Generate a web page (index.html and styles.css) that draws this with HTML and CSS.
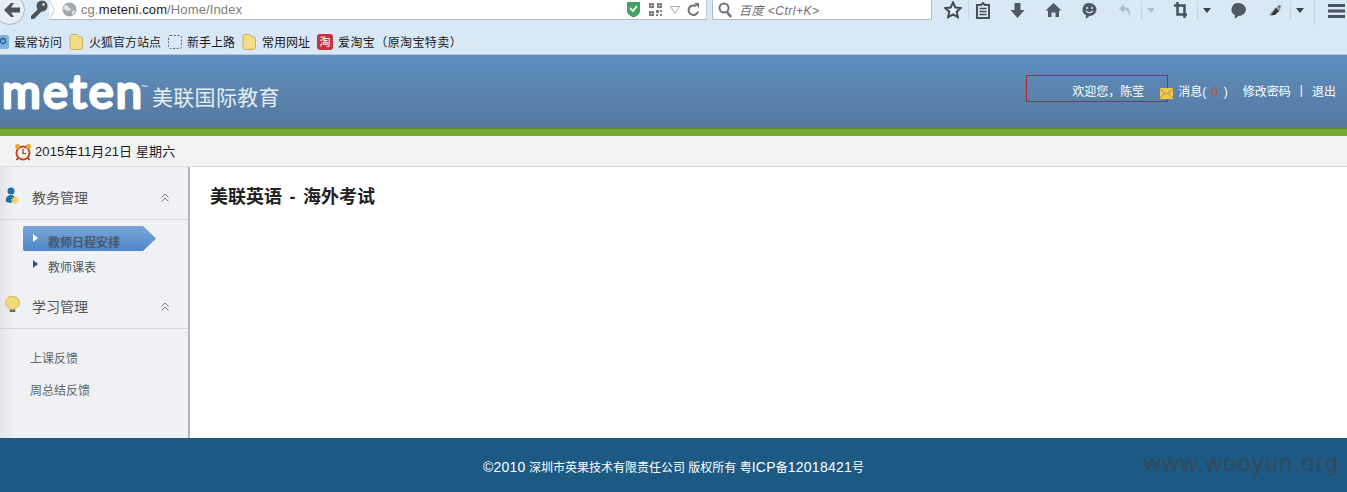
FILE: index.html
```html
<!DOCTYPE html>
<html lang="zh">
<head>
<meta charset="utf-8">
<title>美联英语 - 海外考试</title>
<link rel="stylesheet" href="styles.css">
</head>
<body>
<div class="browser">
  <div class="navrow">
    <div class="backbtn">
      <svg width="16" height="14" viewBox="0 0 16 14"><path d="M0 7 7 0h3L7 4.500h9v5H7L10 14H7z" fill="#4a545e"/></svg>
    </div>
    <svg class="keyicon" width="20" height="20" viewBox="0 0 20 20"><circle cx="13" cy="6" r="5.500" fill="#4c5258"/><path d="M10 8 2 16v3h3l8-8z" fill="#4c5258"/><circle cx="14.500" cy="4.500" r="1.400" fill="#c9d3dc"/></svg>
    <div class="urlbar">
      <svg class="urlchev" width="6" height="20" viewBox="0 0 6 20"><path d="M0 0 5.500 10 0 20" fill="none" stroke="#c3ccd4"/></svg>
      <svg class="globe" width="15" height="15" viewBox="0 0 15 15"><circle cx="7.500" cy="7.500" r="7" fill="#a3a8ac"/><path d="M3 3c3 0 3 2 5 3s0 3-2 3-3-2-5-2zM10 9l3-1-1 4-2 1z" fill="#dfe3e6"/></svg>
      <span class="url">cg.<b>meteni.com</b>/Home/Index</span>
      <span class="urlicons">
        <svg width="15" height="17" viewBox="0 0 15 17"><path d="M1 1h13v9c0 3-3 5-6.500 6.500C4 15 1 13 1 10z" fill="#3fa168"/><path d="m4 7 3 3 4-5" fill="none" stroke="#f1f7c8" stroke-width="2"/></svg>
        <svg width="15" height="15" viewBox="0 0 15 15"><path d="M1 1h5v5H1zM9 1h5v5H9zM1 9h5v5H1zM8 8h3v3H8zM12 12h2v2h-2zM12 8h2v2h-2zM8 12h2v2H8z" fill="#7b8186"/><path d="M3 3h1v1H3zM11 3h1v1h-1zM3 11h1v1H3z" fill="#fff"/></svg>
        <svg width="10" height="8" viewBox="0 0 10 8"><path d="M.5.500h9L5 7.500z" fill="none" stroke="#a8adb2"/></svg>
        <svg width="13" height="14" viewBox="0 0 13 14"><path d="M11 8.500A4.800 4.800 0 1 1 9 3.200" fill="none" stroke="#6c7379" stroke-width="2"/><path d="M7 0h5v5z" fill="#6c7379"/></svg>
      </span>
    </div>
    <div class="searchbar">
      <svg width="15" height="16" viewBox="0 0 15 16"><circle cx="6" cy="6" r="4.500" fill="none" stroke="#6f757b" stroke-width="2"/><path d="m9 10 4 5" stroke="#6f757b" stroke-width="2.500"/></svg>
      <span class="searchtext">百度 &lt;Ctrl+K&gt;</span>
    </div>
    <div class="tools">
      <svg class="tool-star" width="18" height="18" viewBox="0 0 18 18"><path d="m9 1.500 2.300 5 5.400.600-4 3.600 1.100 5.300L9 13.300 4.200 16l1.100-5.300-4-3.600 5.400-.600z" fill="#e9f1f9" stroke="#3f4a55" stroke-width="2"/></svg>
      <span class="divider short"></span>
      <svg class="tool-list" width="14" height="17" viewBox="0 0 14 17"><path d="M1 3h4l2-2 2 2h4v13H1z" fill="#dbe6f0" stroke="#46515b" stroke-width="2"/><path d="M3.500 6.500h7M3.500 9.500h7M3.500 12.500h7" stroke="#46515b" stroke-width="1.500"/></svg>
      <svg class="tool-gap" width="15" height="17" viewBox="0 0 15 17"><path d="M4.500 1h6v7h4l-7 8-7-8h4z" fill="#4f5a64"/></svg>
      <svg class="tool-gap" width="17" height="16" viewBox="0 0 17 16"><path d="M8.500 1 .5 8.500h2.500V15h3.500v-4.500h4V15H14V8.500h2.500z" fill="#4f5a64"/></svg>
      <svg class="tool-near" width="17" height="17" viewBox="0 0 17 17"><path d="M8.500 1a7 6.500 0 0 1 0 13c-1 1-3 2.500-4 2.500l.6-3.200A6.500 6.500 0 0 1 8.500 1z" fill="#4f5a64"/><circle cx="6" cy="6" r="1" fill="#dbe8f6"/><circle cx="11" cy="6" r="1" fill="#dbe8f6"/><path d="M5 9c2 2 5 2 7 0" fill="none" stroke="#dbe8f6" stroke-width="1.300"/></svg>
      <svg class="tool-gap" width="14" height="15" viewBox="0 0 14 15"><path d="M6 1 1 5.500 6 10V7c4 0 5 3 5 7 2-5 1-10-5-10z" fill="#b5bdc5"/></svg>
      <span class="divider"></span>
      <svg class="tool-caret" width="8" height="5" viewBox="0 0 8 5"><path d="M0 0h8L4 5z" fill="#b5bdc5"/></svg>
      <svg class="tool-near" width="14" height="16" viewBox="0 0 14 16"><path d="M3.500 0v12.500H13M0 3.500h10.500V16" fill="none" stroke="#46515b" stroke-width="2.500"/></svg>
      <span class="divider"></span>
      <svg class="tool-caret" width="8" height="5" viewBox="0 0 8 5"><path d="M0 0h8L4 5z" fill="#3a434c"/></svg>
      <svg class="tool-near" width="17" height="17" viewBox="0 0 17 17"><path d="M8.500 1a7.500 6.500 0 0 1 0 13c-1 1-3 2.500-4 2.500l.6-3.200A6.500 6.500 0 0 1 8.500 1z" fill="#4f5a64"/></svg>
      <svg class="tool-gap" width="17" height="15" viewBox="0 0 17 15"><path d="M2 12 8 5l7-3-3 7-7 4z" fill="#9aa0a6"/><path d="M4 12 9 5l3 3-4 4zM11 2l2 1-1 2z" fill="#30363c"/></svg>
      <span class="divider short"></span>
      <svg class="tool-caret" width="8" height="5" viewBox="0 0 8 5"><path d="M0 0h8L4 5z" fill="#3a434c"/></svg>
      <span class="divider tall"></span>
      <svg class="tool-menu" width="17" height="15" viewBox="0 0 17 15"><path d="M0 1h17v3H0zM0 6.500h17v3H0zM0 12h17v3H0z" fill="#4a545e"/></svg>
    </div>
  </div>
  <div class="bookmarks">
    <span class="bm bm-first"><svg width="10" height="16" viewBox="0 0 10 16"><path d="M0 1h8c1 0 2 1 2 2v10c0 1-1 2-2 2H0z" fill="#7db2dd"/><circle cx="4" cy="7" r="2.500" fill="none" stroke="#245f92" stroke-width="1.300"/></svg>最常访问</span>
    <span class="bm"><svg width="14" height="16" viewBox="0 0 14 16"><path class="folder" d="M1 2c0-1 1-1.500 2-1.500h5L10 3h2c1 0 1.500.500 1.500 1.500V13c0 1.500-1 2.500-2.500 2.500H3c-1 0-2-1-2-2z"/></svg>火狐官方站点</span>
    <span class="bm bm-tight"><svg width="14" height="14" viewBox="0 0 14 14"><rect x=".5" y=".5" width="13" height="13" rx="2" fill="none" stroke="#5d6b78" stroke-dasharray="2 1.500"/></svg>新手上路</span>
    <span class="bm"><svg width="14" height="16" viewBox="0 0 14 16"><path class="folder" d="M1 2c0-1 1-1.500 2-1.500h5L10 3h2c1 0 1.500.500 1.500 1.500V13c0 1.500-1 2.500-2.500 2.500H3c-1 0-2-1-2-2z"/></svg>常用网址</span>
    <span class="bm bm-tight"><span class="taobao">淘</span><span class="bm-wide">爱淘宝（原淘宝特卖）</span></span>
  </div>
</div>

<header class="banner">
  <div class="brand">
    <svg class="logo" width="150" height="62" viewBox="0 0 150 62"><text class="logotext" x="2" y="48" textLength="140" lengthAdjust="spacing">meten</text><text class="logotm" x="141" y="30">~</text></svg>
    <span class="brandname">美联国际教育</span>
  </div>
  <div class="usernav">
    <span class="welcome">欢迎您，陈莹</span>
    <svg class="mail" width="13" height="11" viewBox="0 0 13 11"><rect width="13" height="11" fill="#f3c64c"/><path d="m0 1 6.500 5L13 1M0 10l5-5M13 10 8 5" fill="none" stroke="#a98f58"/></svg>
    <span class="msg">消息(<i class="count">0</i>)</span>
    <a class="navlink pw">修改密码</a>
    <span class="sep">|</span>
    <a class="navlink">退出</a>
  </div>
</header>
<div class="greenbar"></div>
<div class="datebar">
  <svg class="clock" width="18" height="18" viewBox="0 0 18 18"><circle cx="9" cy="10" r="6.500" fill="#f7efe0" stroke="#c9472d" stroke-width="2"/><path d="M9 6v4.500h3" fill="none" stroke="#5d5248" stroke-width="1.200"/><circle cx="3.500" cy="3.500" r="2.500" fill="#eaa62c"/><circle cx="14.500" cy="3.500" r="2.500" fill="#eaa62c"/><path d="m4 15-1.500 2M14 15l1.500 2" stroke="#8a3b25" stroke-width="1.500"/></svg>
  <span class="datetext">2015年11月21日 星期六</span>
</div>

<main class="main">
  <aside class="sidebar">
    <section class="group">
      <div class="grouphead">
        <svg class="groupicon" width="15" height="19" viewBox="0 0 15 19"><circle cx="6" cy="4" r="3.500" fill="#1f6fa8"/><path d="M1 15c-1-5 2-7 5-7s4 2 4 4l-4 4z" fill="#1f6fa8"/><path d="M10 9v8M6 13h8M7.500 10.500l5 5M12.500 10.500l-5 5" stroke="#f3d24e" stroke-width="1.500"/></svg>
        <span class="grouptitle">教务管理</span>
        <svg class="chev" width="8" height="9" viewBox="0 0 8 9"><path d="M.5 4.500 4 1l3.500 3.500M.5 8.500 4 5l3.500 3.500" fill="none" stroke="#7a7a7a"/></svg>
      </div>
      <ul class="sublist">
        <li class="subitem active"><span class="arrow"></span><span class="activelabel">教师日程安排</span></li>
        <li class="subitem"><span class="arrow"></span>教师课表</li>
      </ul>
    </section>
    <section class="group">
      <div class="grouphead">
        <svg class="groupicon bulb" width="15" height="18" viewBox="0 0 16 18"><path d="M8 1a7 6.500 0 0 1 3 12.500v1H5v-1A7 6.500 0 0 1 8 1z" fill="#f1dc7c" stroke="#d3b64c"/><path d="M5 15h6v2.500H5z" fill="#6c655a"/></svg>
        <span class="grouptitle">学习管理</span>
        <svg class="chev" width="8" height="9" viewBox="0 0 8 9"><path d="M.5 4.500 4 1l3.500 3.500M.5 8.500 4 5l3.500 3.500" fill="none" stroke="#7a7a7a"/></svg>
      </div>
      <ul class="plainlist">
        <li>上课反馈</li>
        <li>周总结反馈</li>
      </ul>
    </section>
  </aside>
  <section class="content">
    <h1 class="pagetitle">美联英语 - 海外考试</h1>
  </section>
</main>

<footer class="footer">
  <span class="copy"><span class="lat">©2010</span> 深圳市英果技术有限责任公司 版权所有 粤<span class="lat">ICP</span>备<span class="lat">12018421</span>号</span>
  <span class="watermark">www.wooyun.org</span>
</footer>
</body>
</html>
```
FILE: styles.css
```css
* { box-sizing: border-box; }
html, body { margin: 0; padding: 0; }
body {
  width: 1347px;
  height: 492px;
  overflow: hidden;
  display: flex;
  flex-direction: column;
  position: relative;
  font-family: "Liberation Sans", "Noto Sans CJK SC", sans-serif;
  font-size: 12px;
  color: #333;
  background: #fff;
}
ul { list-style: none; margin: 0; padding: 0; }

/* browser chrome */
.browser { height: 55px; flex: none; background: #d9e8f7; overflow: hidden; }
.navrow { height: 22px; display: flex; align-items: flex-start; }
.backbtn {
  width: 31px; height: 31px; margin: -6px 0 0 -6px; flex: none;
  border-radius: 50%;
  background: #e8eef4;
  border: 1px solid #a9b4bd;
  display: flex; align-items: center; justify-content: center;
  padding-left: 4px;
}
.keyicon { margin: 0 0 0 4px; flex: none; }
.urlbar {
  width: 658px; height: 20px; flex: none;
  background: #fff;
  border-bottom: 1px solid #aebcc8;
  border-right: 1px solid #c3d0da;
  display: flex; align-items: center;
}
.urlchev { flex: none; }
.globe { flex: none; margin-left: 7px; }
.url { margin-left: 4px; font-size: 13px; letter-spacing: .12px; color: #7d7d7d; }
.url b { font-weight: 400; color: #1c1c1c; }
.urlicons { margin-left: auto; display: flex; align-items: center; gap: 7px; padding-right: 6px; }
.searchbar {
  width: 220px; height: 20px; margin-left: 5px; flex: none;
  background: #fff;
  border: 1px solid #aebcc8; border-top: 0;
  display: flex; align-items: center; padding-left: 5px; gap: 6px;
}
.searchtext { font-style: italic; font-size: 12px; letter-spacing: .5px; color: #6f6f6f; }
.tools { display: flex; align-items: center; height: 20px; margin-left: 12px; }
.tools svg { flex: none; }
.tool-list { margin-left: 7px; }
.tool-gap { margin-left: 20px; }
.tool-near { margin-left: 19px; }
.tool-caret { margin-left: 5px; }
.divider { width: 1px; height: 19px; margin-left: 9px; background: #c6d5e3; flex: none; }
.short { margin-left: 6px; }
.tall { height: 25px; margin-left: 10px; align-self: flex-start; }
.tool-menu { margin-left: 13px; }

.bookmarks {
  height: 33px;
  padding: 7px 0 0 0;
  display: flex; align-items: center;
  font-size: 12px; color: #1a1a1a;
  gap: 7px;
  border-bottom: 1px solid #b4c6d7;
}
.bm { display: flex; align-items: center; gap: 6px; white-space: nowrap; }
.bm-tight { gap: 5px; }
.bm-first { margin-left: -1px; gap: 5px; }
.bm-wide { letter-spacing: .4px; }
.folder { fill: #f3dc8a; stroke: #c9ae58; }
.taobao {
  width: 16px; height: 16px; border-radius: 3px;
  background: #c4333d; color: #fff; font-size: 11px; line-height: 16px; text-align: center;
}

/* site header */
.banner {
  height: 73px; flex: none;
  background: linear-gradient(#5f8fbe, #55789f);
  display: flex; justify-content: space-between; color: #fff;
}
.brand { display: flex; align-items: flex-start; padding-top: 5px; }
.logo { flex: none; display: block; }
.logotext {
  font-family: "Lato", sans-serif; font-size: 47px; font-weight: 400;
  fill: #fff; stroke: #fff; stroke-width: 3; stroke-linejoin: round; stroke-linecap: round;
}
.logotm { font-family: "Liberation Sans", sans-serif; font-size: 12px; fill: #dde7f1; }
.brandname { font-size: 21px; line-height: 30px; letter-spacing: .3px; color: #e6eef6; margin-left: 2px; padding-top: 23px; height: 60px; }
.usernav { display: flex; align-items: center; font-size: 12px; padding: 0 11px 3px 0; white-space: nowrap; }
.welcome {
  width: 142px; height: 27px; margin-top: -4px;
  border: 1px solid #b02538;
  text-align: right; line-height: 32px; padding-right: 23px;
  margin-right: -8px;
}
.mail { margin: 7px 5px 0 0; }
.count { font-style: normal; color: #c0523d; padding: 0 6px 0 5px; }
.pw { margin-left: 15px; }
.sep { margin: 0 9px; }

.greenbar { height: 8px; flex: none; background: #76a82f; border-top: 1px solid #5e8a35; }
.datebar {
  height: 31px; flex: none;
  background: #f2f2f2;
  border-bottom: 1px solid #dcdcdc;
  display: flex; align-items: center; gap: 3px;
  padding: 0 0 0 14px;
  font-size: 13px; color: #1e1e1e;
}
.clock { margin-top: 2px; }
.datetext { margin-top: -2px; letter-spacing: .12px; }

/* main */
.main { flex: 1; display: flex; min-height: 0; }
.sidebar {
  width: 190px; flex: none;
  background: linear-gradient(90deg, #e4e5e7, #eff1f5 14px);
  border-right: 2px solid #b3b3b3;
  padding-top: 12px;
}
.grouphead {
  height: 41px; display: flex; align-items: center;
  border-bottom: 1px solid #d6d6d6;
}
.groupicon { margin: -6px 0 0 5px; flex: none; }
.bulb { margin-top: -8px; }
.grouptitle { font-size: 14px; color: #555; margin: -4px 0 0 12px; }
.chev { margin: -4px 19px 0 auto; flex: none; }
.sublist { padding: 6px 0 8px 23px; }
.subitem {
  height: 25px; line-height: 26px; font-size: 12px; color: #555; padding-left: 25px;
  position: relative; width: 134px;
}
.subitem + .subitem { margin-top: 4px; }
.arrow {
  position: absolute; left: 10px; top: 5px;
  border-left: 5px solid #1a5a80;
  border-top: 4px solid transparent;
  border-bottom: 4px solid transparent;
}
.active {
  background: linear-gradient(#7ba7da, #4f86c8);
  clip-path: polygon(0 0, 120px 0, 133px 50%, 120px 100%, 0 100%);
  border-radius: 2px 0 0 2px;
  line-height: 35px;
}
.activelabel { color: #4d5a6e; text-shadow: 0 0 1px #3c4654; }
.active .arrow { border-left-color: #fff; top: 8px; }
.plainlist { padding: 14px 0 0 30px; font-size: 12px; color: #666; }
.plainlist li { height: 32px; line-height: 32px; }

.content { flex: 1; padding: 17px 0 0 20px; background: #fff; }
.pagetitle { margin: 0; font-size: 18px; font-weight: 700; color: #222; line-height: 26px; word-spacing: 2.5px; }

.footer {
  height: 54px; flex: none;
  background: #1c5a83;
  color: #fff;
  text-align: center;
  line-height: 58px;
  font-size: 12px;
  position: relative;
}
.lat { font-size: 14px; letter-spacing: .25px; }
.watermark {
  position: absolute; right: 8px; top: 11px;
  font-size: 24px; line-height: 28px; letter-spacing: 1px;
  color: #35495c;
}
```
